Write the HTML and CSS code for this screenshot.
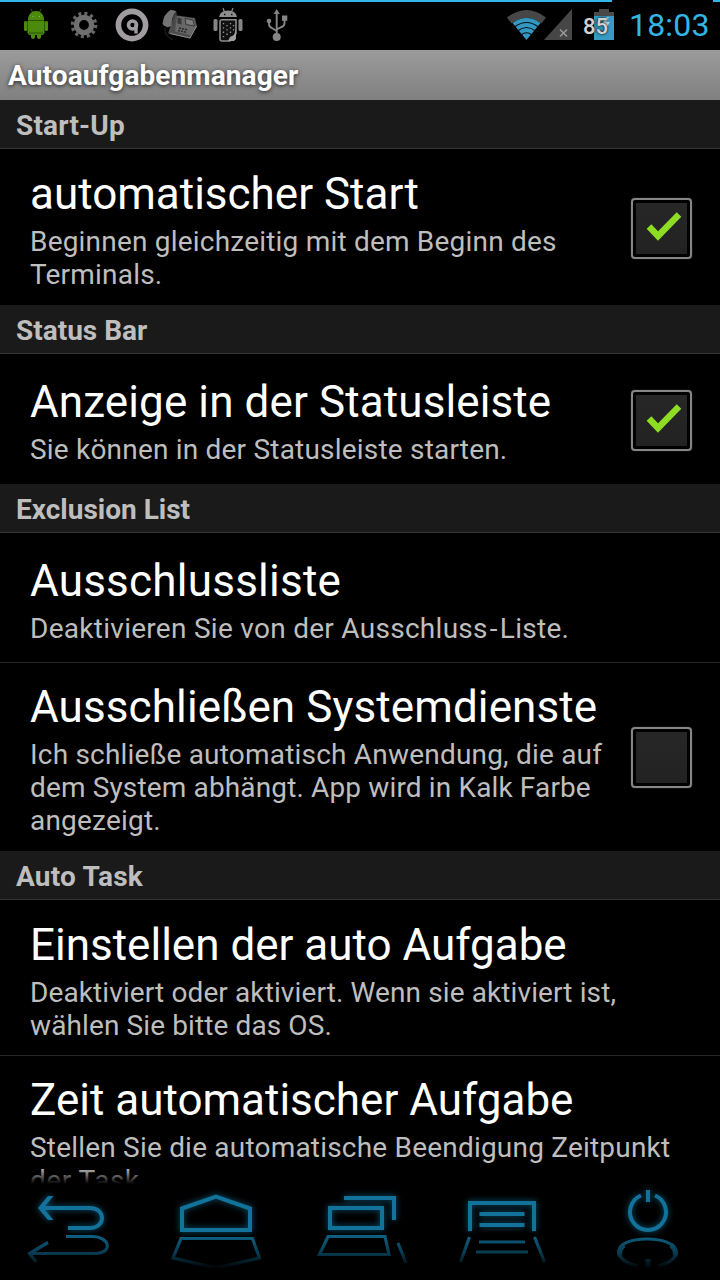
FILE: index.html
```html
<!DOCTYPE html>
<html lang="de">
<head>
<meta charset="utf-8">
<title>Autoaufgabenmanager</title>
<link rel="stylesheet" href="styles.css">
</head>
<body>
<div class="screen">
  <header class="status">
    <div class="notifications">
      <svg class="n-android" viewBox="23 8 26 32" width="26" height="32"><g fill="#4c8a0c"><path d="M28 20c0-6 4-9 8-9s8 3 8 9z"/><path d="M27.500 21h17v11q0 3-3 3h-11q-3 0-3-3z"/><rect x="24" y="21" width="3.300" height="10" rx="1.500"/><rect x="44.700" y="21" width="3.300" height="10" rx="1.500"/><rect x="31" y="33" width="4" height="6" rx="2"/><rect x="37" y="33" width="4" height="6" rx="2"/></g><path d="M31 9l1.500 3M41 9l-1.500 3" stroke="#355f0a"/><path d="M28 20.500h16M29 33h14" stroke="#2b5308"/><path d="M32.500 16.500h1M39 16.500h1" stroke="#9ab580"/></svg>
      <svg class="n-gear" viewBox="70 11 28 28" width="28" height="28"><circle cx="84" cy="25" r="7.600" fill="none" stroke="#707070" stroke-width="5.400"/><circle cx="84" cy="25" r="11.500" fill="none" stroke="#666" stroke-width="3.600" stroke-dasharray="3 3.022"/></svg>
      <svg class="n-at" viewBox="115 8 34 34" width="34" height="34"><g fill="none" stroke="#a09ca0"><circle cx="132" cy="25" r="13.600" stroke-width="5.600"/><circle cx="132.500" cy="25" r="4" stroke-width="3.600"/><path d="M136 24.500v9" stroke-width="3.400"/></g></svg>
      <svg class="n-phone" viewBox="161 8 37 34" width="37" height="34"><path d="M174 15l21 3 2 8.500-7 12-22-5z" fill="#4c4c4c"/><path d="M177 16l17 2.500 2 7-5 10-16-4z" fill="#676767"/><path d="M185 18.500l8 1.500 1.500 6-8.500-1.500z" fill="#7c7c7c" stroke="#383838"/><path d="M177.500 17.500l4 1v6l-4-1z" fill="#393939"/><path d="M179 28l9 2M178 30.500l9 2" stroke="#292929" stroke-width="1.500" stroke-dasharray="2 1"/><path d="M170 33.500l20 4.500 6.500-12" fill="none" stroke="#8d8d8d"/><path d="M162.500 24q1-10 8-14 3-.5 6 1.500-5 4-5 14-5 4-9-1.500z" fill="#737373"/><path d="M176 12q-4 5-4 13l2 1q0-7 3-12z" fill="#444"/><path d="M165 28q-1 8 8 12" fill="none" stroke="#292929"/></svg>
      <svg class="n-droid" viewBox="213 7 31 36" width="31" height="36"><path d="M219 17q1-6.500 9-6.500t9 6.500z" fill="#8e8e8e"/><path d="M223 8l1.500 4M233 8l-1.500 4" stroke="#8e8e8e" stroke-width="1.200"/><path d="M224 14.500h1.500M231 14.500h1.500" stroke="#111" stroke-width="1.500"/><rect x="213.500" y="19" width="4" height="12" rx="1.500" fill="#858585"/><rect x="238.500" y="19" width="4" height="12" rx="1.500" fill="#858585"/><path d="M222 19.800h14v14l-6 7.200h-8q-2 0-2-2V21.800q0-2 2-2z" fill="#111" stroke="#8a8a8a" stroke-width="1.600"/><path d="M223.500 23v15M230.500 23v12" stroke="#999" stroke-width="1.300" stroke-dasharray="1.300 3"/><path d="M227 25v13M233.500 25v6" stroke="#999" stroke-width="1.300" stroke-dasharray="1.300 3"/><path d="M236 29v10l-2 2h-6l2-4 4-2z" fill="#a0a0a0"/></svg>
      <svg class="n-usb" viewBox="265 8 24 34" width="24" height="34"><g fill="#858585"><path d="M276.700 9l3 5h-6z"/><circle cx="276.700" cy="37" r="4"/><circle cx="269" cy="21" r="2.300"/><path d="M282 15.500h5.300v5.300H282z"/></g><path d="M276.700 13v23M269 21v3q0 3 3 4l4.700 3M284.500 20v3q0 3-3 4l-4.800 2.500" fill="none" stroke="#858585" stroke-width="1.900"/></svg>
    </div>
    <div class="indicators">
      <svg class="i-wifi" viewBox="507 8 40 34" width="40" height="34"><path d="M507 17.500q19.500-15 39 0l-4.500 6q-15-11-30 0z" fill="#474747"/><path d="M512.500 23q14-10 28 0L526.500 40z" fill="#3298c2"/><path d="M514.500 27q12-9 24 0M517.500 31q9-7 18 0M521 35q5.500-4.500 11 0" fill="none" stroke="#061014" stroke-width="1.200"/></svg>
      <svg class="i-signal" viewBox="544 8 29 33" width="29" height="33"><path d="M544 40h28V9z" fill="#464646"/><path d="M560 29.500l7 7m0-7l-7 7" stroke="#9c9c9c" stroke-width="1.500"/></svg>
      <div class="battery">
        <svg viewBox="594 8 21 33" width="21" height="33"><path d="M594 12h5V9h10v3h5v5h-20z" fill="#4a4a4a"/><path d="M594 16h20v24h-20z" fill="#369ac1"/><path d="M607 17l-5 7h4l-2 7 6-9h-4l3-5z" fill="#b9d6e0"/></svg>
        <span class="level">85</span>
      </div>
      <span class="clock">18:03</span>
    </div>
  </header>
  <h1 class="titlebar">Autoaufgabenmanager</h1>
  <main class="list">
    <h2 class="section wide">Start-Up</h2>
    <div class="row r1"><div class="text"><div class="title">automatischer Start</div><p class="summary">Beginnen gleichzeitig mit dem Beginn des<br>Terminals.</p></div>
      <span class="check"><svg viewBox="0 0 61 61" width="61" height="61"><path d="M18 28.500L27 38 48 16.500" fill="none" stroke="#8fdc25" stroke-width="6.500"/></svg></span></div>
    <h2 class="section">Status Bar</h2>
    <div class="row r2"><div class="text"><div class="title t2">Anzeige in der Statusleiste</div><p class="summary">Sie können in der Statusleiste starten.</p></div>
      <span class="check"><svg viewBox="0 0 61 61" width="61" height="61"><path d="M18 28.500L27 38 48 16.500" fill="none" stroke="#8fdc25" stroke-width="6.500"/></svg></span></div>
    <h2 class="section">Exclusion List</h2>
    <div class="row r3"><div class="text"><div class="title t3">Ausschlussliste</div><p class="summary m3">Deaktivieren Sie von der Ausschluss<span class="hyphen">-</span>Liste.</p></div></div>
    <div class="row r4"><div class="text"><div class="title t2">Ausschließen Systemdienste</div><p class="summary">Ich schließe automatisch Anwendung, die auf<br><span class="m4">dem System abhängt. App wird in Kalk Farbe</span><br>angezeigt.</p></div>
      <span class="check"></span></div>
    <h2 class="section wide">Auto Task</h2>
    <div class="row r5"><div class="text"><div class="title">Einstellen der auto Aufgabe</div><p class="summary m5">Deaktiviert oder aktiviert. Wenn sie aktiviert ist,<br>wählen Sie bitte das OS.</p></div></div>
    <div class="row r6"><div class="text"><div class="title">Zeit automatischer Aufgabe</div><p class="summary">Stellen Sie die automatische Beendigung Zeitpunkt<br><span class="m6">der Task.</span></p></div></div>
  </main>
  <nav class="navbar">
    <svg class="key" viewBox="0 1184 144 96"><defs><linearGradient id="fade" gradientUnits="userSpaceOnUse" x1="0" y1="1234" x2="0" y2="1269"><stop offset="0" stop-color="#0e6387"/><stop offset=".55" stop-color="#083a4f"/><stop offset="1" stop-color="#000"/></linearGradient></defs>
      <g class="glow"><path class="line" d="M42 1208h48c16 0 16 20 0 20H68"/><path class="solid" d="M48 1196h5.500L43.500 1208l10 12H48L38 1208z"/></g>
      <path class="mirror" d="M66 1236.500h26c18 0 22 17 2 17H32M48 1242.500L29.500 1253.500 36 1262"/></svg>
    <svg class="key" viewBox="144 1184 144 96"><g class="glow"><path class="line" d="M182 1208.500l34-12 34 12v21.500h-68z"/></g><path class="mirror" d="M181 1238.500h71.500l7 19.500-43.500 10-43-10z"/></svg>
    <svg class="key" viewBox="288 1184 144 96"><g class="glow"><path class="line" d="M330 1208h52v20h-52zM344 1198h50v22"/></g><path class="mirror" d="M328 1236.500h57l4 18h-69.500zM398 1243l8 20"/></svg>
    <svg class="key" viewBox="432 1184 144 96"><g class="glow"><path class="line" d="M470 1231v-28h64v28M479.500 1214h45M479.500 1225h45"/></g><path class="mirror" d="M469.500 1237l-9 25M534.500 1237l10 25M479 1242h46M476 1252h52"/></svg>
    <svg class="key" viewBox="576 1184 144 96"><g class="glow"><path class="line" d="M641 1195.500a18 18 0 1 0 14 0M648 1190v12"/></g><path class="mirror" d="M638 1266c-28-6-26-27 9-27s38 21 11 27"/><path class="mirror wide-stroke" d="M620 1256q-2-6 4-11M675 1256q2-6-4-11M648 1259v9"/></svg>
  </nav>
</div>
</body>
</html>
```
FILE: styles.css
```css
* { box-sizing: border-box; }
body { margin: 0; background: #000; font-family: Roboto, sans-serif; }
h1, h2, p { margin: 0; }
svg { display: block; flex: none; }
.screen { width: 720px; height: 1280px; overflow: hidden; position: relative; background: #000; }
.status { height: 50px; display: flex; justify-content: space-between; padding-top: 7px;
  background: linear-gradient(90deg, #33b5e5 612px, #000 612px, #000 713px, #33b5e5 713px) top / 100% 2px no-repeat #000; }
.notifications, .indicators { display: flex; align-items: flex-start; height: 36px; }
.notifications { padding-left: 23px; }
.n-android, .n-at, .n-phone, .n-usb, .i-wifi, .i-signal { margin-top: 1px; }
.n-gear { margin: 4px 0 0 21px; }
.n-at { margin-left: 17px; }
.n-phone { margin-left: 12px; }
.n-droid { margin-left: 15px; }
.n-usb { margin-left: 21px; }
.i-wifi { margin-right: -3px; }
.battery { position: relative; margin: 1px 14px 0 21px; }
.level { position: absolute; right: 7px; top: 5px; font: 500 22px/28px Roboto, sans-serif; color: #d2d2d2; text-shadow: 0 0 3px #000, 0 0 1px #333; }
.clock { font-size: 32px; line-height: 37px; letter-spacing: .2px; color: #33b5e5; width: 80px; white-space: nowrap; margin-right: 11px; }
.titlebar { height: 50px; padding-left: 8px; font-size: 28px; line-height: 52px; letter-spacing: .1px; color: #fff; background: linear-gradient(#9b9b9b, #808080); text-shadow: 0 1px 4px #222; }
.section { height: 49px; padding-left: 16px; font-size: 28px; line-height: 51px; color: #bebebe; background: #1a1a1a; border-bottom: 1px solid #353535; }
.section.wide { letter-spacing: .2px; }
.row { display: flex; justify-content: space-between; padding: 19px 28px 0 30px; }
.text { white-space: nowrap; }
.title { font-size: 44px; line-height: 52px; color: #fff; }
.t2 { letter-spacing: .11px; }
.t3 { letter-spacing: .23px; }
.summary { margin-top: 5px; font-size: 28px; line-height: 33px; letter-spacing: .2px; color: #bebebe; }
.m3 { letter-spacing: .28px; }
.hyphen { padding: 0 2px; }
.m4 { letter-spacing: .14px; }
.m5 { letter-spacing: .11px; }
.m6 { letter-spacing: .5px; }
.check { width: 61px; height: 61px; flex: none; border: 2px solid #868686; border-radius: 4px; padding: 3px; background: linear-gradient(#272727, #222) content-box; margin-top: 30px; box-shadow: 0 0 1px #777; }
.check svg { margin: -5px; }
.r1 { height: 156px; }
.r2 { height: 130px; padding-top: 22px; }
.r2 .check { margin-top: 14px; }
.r3 { height: 130px; padding-top: 22px; border-bottom: 1px solid #262626; }
.r4 { height: 188px; padding-top: 18px; }
.r4 .check { margin-top: 46px; }
.r5 { height: 156px; border-bottom: 1px solid #262626; }
.r6 { height: 170px; padding-top: 18px; }
.navbar { position: absolute; left: 0; right: 0; bottom: 0; height: 112px; padding-top: 16px; display: flex; background: linear-gradient(transparent, #000 16px); }
.key { width: 144px; height: 96px; fill: none; }
.glow { filter: drop-shadow(0 0 3px #0c5878); }
.line { stroke: #12729a; stroke-width: 4; }
.solid { fill: #12729a; }
.mirror { stroke: url(#fade); stroke-width: 3.2; }
.wide-stroke { stroke-width: 5; }
```
